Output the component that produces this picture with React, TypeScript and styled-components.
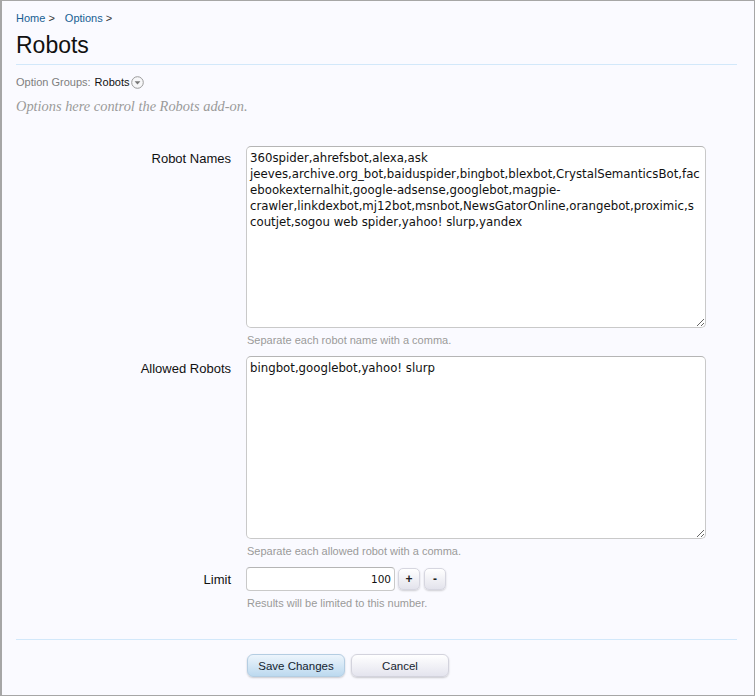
import { useState } from 'react';
import styled, { createGlobalStyle } from 'styled-components';

const GlobalStyle = createGlobalStyle`
  body {
    margin: 0;
    background: #ffffff;
    font-family: 'Liberation Sans', Arial, sans-serif;
  }
`;

const Page = styled.div`
  box-sizing: border-box;
  width: 755px;
  height: 696px;
  padding: 10px 17px 0 14px;
  border: 1px solid #a6a6a6;
  border-left-width: 2px;
  background: #fafaff;
  color: #141414;
`;

const Breadcrumb = styled.div`
  display: flex;
  gap: 10px;
  font-size: 11px;
  line-height: 14px;
`;

const Crumb = styled.a`
  color: #176093;
  text-decoration: none;

  &::after {
    content: ' >';
    color: #333;
  }
`;

const TitleBar = styled.div`
  margin-top: 6px;
  padding-bottom: 5px;
  border-bottom: 1px solid #d2e8fa;
`;

const Title = styled.h1`
  margin: 0;
  font-size: 23px;
  font-weight: normal;
  line-height: 28px;
  color: #111;
`;

const GroupLine = styled.div`
  display: flex;
  align-items: center;
  margin-top: 9px;
  font-size: 11px;
  line-height: 16px;
  color: #7e7e7e;
`;

const GroupName = styled.span`
  margin-left: 4px;
  color: #111;
`;

const Explain = styled.p`
  margin: 7px 0 0;
  font-family: 'Liberation Serif', Georgia, serif;
  font-style: italic;
  font-size: 14.4px;
  line-height: 18px;
  color: #9a9a9a;
`;

const Form = styled.form`
  margin-top: 31px;
`;

const Row = styled.div`
  display: grid;
  grid-template-columns: 215px 460px;
  column-gap: 15px;
  margin-bottom: 9px;
`;

const Label = styled.label`
  padding-top: 5px;
  text-align: right;
  font-size: 13px;
  line-height: 16px;
  color: #111;
`;

const Field = styled.div`
  display: flex;
  flex-direction: column;
`;

// the right padding keeps the wrap points of the long robot list as in the original
const TextArea = styled.textarea<{ $height: number }>`
  box-sizing: border-box;
  width: 460px;
  height: ${(p) => p.$height}px;
  margin: 0;
  padding: 3px 5.015625px 3px 3px;
  border: 1px solid #c9c9c9;
  border-top-color: #b5b5b5;
  border-radius: 5px;
  background: #fff;
  font-family: 'DejaVu Sans', Tahoma, sans-serif;
  font-size: 11.75px;
  line-height: 16px;
  color: #111;
  resize: vertical;
  outline: none;
`;

const Hint = styled.div`
  margin-top: 5px;
  padding-left: 1px;
  font-size: 11px;
  line-height: 14px;
  color: #9a9a9a;
`;

const SpinRow = styled.div`
  display: flex;
  align-items: center;
`;

const NumberInput = styled.input`
  box-sizing: border-box;
  width: 149px;
  height: 24px;
  margin: 0;
  padding: 2px 3px;
  border: 1px solid #c9c9c9;
  border-top-color: #b5b5b5;
  border-radius: 4px;
  background: #fff;
  font-family: 'DejaVu Sans', Tahoma, sans-serif;
  font-size: 10.5px;
  text-align: right;
  color: #111;
  outline: none;
`;

const SpinButton = styled.button`
  box-sizing: border-box;
  width: 22px;
  height: 22px;
  margin-left: 3px;
  padding: 0;
  border: 1px solid #d6d6e0;
  border-radius: 5px;
  background: linear-gradient(#ffffff, #e3e3ec);
  box-shadow: 0 1px 2px rgba(0, 0, 0, 0.18);
  font-family: 'Liberation Sans', Arial, sans-serif;
  font-size: 12px;
  font-weight: bold;
  color: #222;

  & + & {
    margin-left: 4px;
  }
`;

const Submit = styled.div`
  display: flex;
  gap: 6px;
  margin-top: 29px;
  padding: 14px 0 0 231px;
  border-top: 1px solid #d2e8fa;
`;

const Button = styled.button<{ $primary?: boolean }>`
  box-sizing: border-box;
  width: 98px;
  height: 23px;
  padding: 0;
  border: 1px solid ${(p) => (p.$primary ? '#b4cde2' : '#d3d3dd')};
  border-radius: 6px;
  background: ${(p) =>
    p.$primary ? 'linear-gradient(#edf5fc, #bcd9ef)' : 'linear-gradient(#ffffff, #e4e4ee)'};
  box-shadow: 0 1px 2px rgba(0, 0, 0, 0.2);
  font-family: 'Liberation Sans', Arial, sans-serif;
  font-size: 11.5px;
  color: #15232f;
`;

function DropIcon() {
  return (
    <svg width="13" height="13" viewBox="0 0 13 13" style={{ marginLeft: 2 }}>
      <circle cx="6.5" cy="6.5" r="5.8" fill="#f7f7f9" stroke="#9a9a9a" />
      <path d="M3.6 5.2 L9.4 5.2 L6.5 8.4 Z" fill="#777" />
    </svg>
  );
}

const robotNames =
  '360spider,ahrefsbot,alexa,ask jeeves,archive.org_bot,baiduspider,bingbot,blexbot,CrystalSemanticsBot,facebookexternalhit,google-adsense,googlebot,magpie-crawler,linkdexbot,mj12bot,msnbot,NewsGatorOnline,orangebot,proximic,scoutjet,sogou web spider,yahoo! slurp,yandex';

function App() {
  const [limit, setLimit] = useState(100);

  return (
    <Page>
      <GlobalStyle />
      <Breadcrumb>
        <Crumb href="#">Home</Crumb>
        <Crumb href="#">Options</Crumb>
      </Breadcrumb>
      <TitleBar>
        <Title>Robots</Title>
      </TitleBar>
      <GroupLine>
        Option Groups:
        <GroupName>Robots</GroupName>
        <DropIcon />
      </GroupLine>
      <Explain>Options here control the Robots add-on.</Explain>

      <Form onSubmit={(e) => e.preventDefault()}>
        <Row>
          <Label htmlFor="robotNames">Robot Names</Label>
          <Field>
            <TextArea id="robotNames" $height={182} defaultValue={robotNames} />
            <Hint>Separate each robot name with a comma.</Hint>
          </Field>
        </Row>
        <Row>
          <Label htmlFor="allowedRobots">Allowed Robots</Label>
          <Field>
            <TextArea id="allowedRobots" $height={183} defaultValue="bingbot,googlebot,yahoo! slurp" />
            <Hint>Separate each allowed robot with a comma.</Hint>
          </Field>
        </Row>
        <Row>
          <Label htmlFor="limit">Limit</Label>
          <Field>
            <SpinRow>
              <NumberInput
                id="limit"
                value={limit}
                onChange={(e) => setLimit(Number(e.target.value) || 0)}
              />
              <SpinButton type="button" onClick={() => setLimit(limit + 1)}>
                +
              </SpinButton>
              <SpinButton type="button" onClick={() => setLimit(Math.max(0, limit - 1))}>
                -
              </SpinButton>
            </SpinRow>
            <Hint>Results will be limited to this number.</Hint>
          </Field>
        </Row>
        <Submit>
          <Button $primary type="submit">
            Save Changes
          </Button>
          <Button type="reset">Cancel</Button>
        </Submit>
      </Form>
    </Page>
  );
}

export default App;
